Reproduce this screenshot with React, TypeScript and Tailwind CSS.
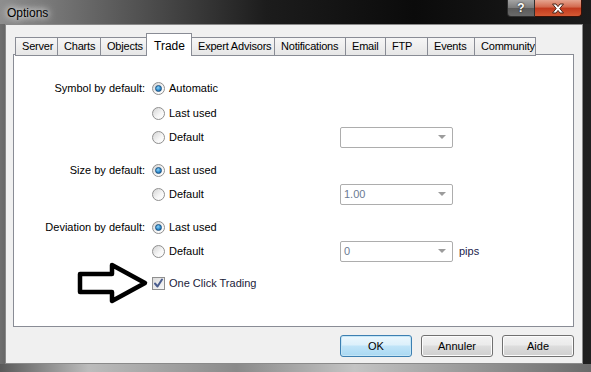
import React from 'react';

// Windows 7 style "Options" dialog, Trade tab

type Tab = { name: string; w: string; active?: boolean };

const tabs: Tab[] = [
  { name: 'Server', w: 'w-[43px]' },
  { name: 'Charts', w: 'w-[44px]' },
  { name: 'Objects', w: 'w-[47px]' },
  { name: 'Trade', w: 'w-[46px]', active: true },
  { name: 'Expert Advisors', w: 'w-[84px]' },
  { name: 'Notifications', w: 'w-[72px]' },
  { name: 'Email', w: 'w-[41px]' },
  { name: 'FTP', w: 'w-[43px]' },
  { name: 'Events', w: 'w-[48px]' },
  { name: 'Community', w: 'w-[62px]' },
];

type Row = {
  label?: string;
  kind: 'radio' | 'check';
  text: string;
  checked?: boolean;
  combo?: string;
  pips?: boolean;
  mt: string;
};

const rows: Row[] = [
  { label: 'Symbol by default:', kind: 'radio', text: 'Automatic', checked: true, mt: 'mt-0' },
  { kind: 'radio', text: 'Last used', mt: 'mt-[1px]' },
  { kind: 'radio', text: 'Default', combo: '', mt: 'mt-0' },
  { label: 'Size by default:', kind: 'radio', text: 'Last used', checked: true, mt: 'mt-[9px]' },
  { kind: 'radio', text: 'Default', combo: '1.00', mt: 'mt-0' },
  { label: 'Deviation by default:', kind: 'radio', text: 'Last used', checked: true, mt: 'mt-[9px]' },
  { kind: 'radio', text: 'Default', combo: '0', pips: true, mt: 'mt-0' },
  { kind: 'check', text: 'One Click Trading', checked: true, mt: 'mt-[8px]' },
];

function Radio({ checked }: { checked?: boolean }) {
  return (
    <div className="w-[13px] h-[13px] rounded-full border border-[#8f8f8f] bg-[linear-gradient(135deg,#d4d4d4,#f7f7f7_60%,#ffffff)] flex items-center justify-center">
      {checked && (
        <div className="w-[7px] h-[7px] rounded-full border border-[#1c5180] bg-[radial-gradient(circle_at_40%_35%,#8fd3f6,#2f8dd0_55%,#0f4f8f)]" />
      )}
    </div>
  );
}

function Check({ checked }: { checked?: boolean }) {
  return (
    <div className="w-[13px] h-[13px] border border-[#8f8f8f] bg-[linear-gradient(135deg,#dcdcdc,#f8f8f8)] flex items-center justify-center">
      {checked && (
        <svg width="11" height="11" viewBox="0 0 11 11">
          <path d="M2 5.5 L4.5 8.5 L9 1.5" fill="none" stroke="#4a5d8e" strokeWidth="2" strokeLinecap="round" strokeLinejoin="round" />
        </svg>
      )}
    </div>
  );
}

function Combo({ value }: { value: string }) {
  return (
    <div className="w-[113px] h-[21px] rounded-[2px] border border-[#adadad] bg-white flex items-center pl-[3px] pr-[6px]">
      <span className="flex-1 text-[#6b7a92]">{value}</span>
      <svg width="8" height="5" viewBox="0 0 8 5">
        <path d="M0 0 H8 L4 4 Z" fill="#9c9c9c" />
      </svg>
    </div>
  );
}

function Button({ label, primary }: { label: string; primary?: boolean }) {
  return (
    <div
      className={
        primary
          ? 'w-[72px] h-[22px] rounded-[3px] border border-[#3c7fb1] bg-[linear-gradient(#ecf7fd,#dcf0fb_45%,#c0e4f8_50%,#a9d8f2)] flex items-center justify-center shadow-[inset_0_0_0_1px_#c4e5f6]'
          : 'w-[72px] h-[22px] rounded-[3px] border border-[#707070] bg-[linear-gradient(#f2f2f2,#ebebeb_45%,#dddddd_50%,#cfcfcf)] flex items-center justify-center shadow-[inset_0_0_0_1px_#fcfcfc]'
      }
    >
      {label}
    </div>
  );
}

export default function App() {
  return (
    <div className="w-[591px] h-[372px] flex flex-col overflow-hidden bg-[linear-gradient(to_right,#6f6f6f,#3c3c3c_6%,#1a1a1a_40%,#0d0d0d_75%,#202020)] font-['Liberation_Sans',Arial,sans-serif] text-[11px] text-black">
      {/* title bar */}
      <div className="h-[24px] flex items-start shrink-0 bg-[linear-gradient(to_right,#8e8e8e,#5a5a5a_20%,#1c1c1c_45%,#0b0b0b_70%,#1c1c1c)]">
        <div className="pl-[7px] pt-[4px] text-[12px] text-black [text-shadow:0_0_6px_#ffffff,0_0_10px_#ffffff]">Options</div>
        <div className="ml-auto mr-[9px] flex h-[17px]">
          <div className="w-[28px] h-full rounded-bl-[4px] border border-t-0 border-[#2e2e2e] bg-[linear-gradient(#a4a4a4,#7a7a7a_50%,#5a5a5a_51%,#6a6a6a)] flex items-center justify-center text-white font-bold text-[12px] [text-shadow:0_0_2px_#000]">
            ?
          </div>
          <div className="w-[47px] h-full rounded-br-[4px] border border-t-0 border-l-0 border-[#3a1208] bg-[linear-gradient(#e5a48f,#d2684c_45%,#c1391d_50%,#d55a34)] flex items-center justify-center">
            <svg width="14" height="11" viewBox="0 0 14 11">
              <path d="M1.5 1 H5 L7 3.6 L9 1 H12.5 L8.8 5.5 L12.5 10 H9 L7 7.4 L5 10 H1.5 L5.2 5.5 Z" fill="#ffffff" stroke="#4a2418" strokeWidth="1" strokeLinejoin="round" />
            </svg>
          </div>
        </div>
      </div>

      {/* client area */}
      <div className="ml-[5px] mr-[8px] h-[340px] border border-[#8a8a8a] bg-[#f0f0f0] flex flex-col pt-[8px] pl-[7px] pr-[8px]">
        {/* tabs */}
        <div className="flex items-end pl-[2px] h-[22px] relative z-10">
          {tabs.map((t, i) =>
            t.active ? (
              <div
                key={t.name}
                className={`${t.w} -ml-px h-[22px] border border-b-0 border-[#898c95] bg-white flex items-start pt-[3px] pl-[7px] whitespace-nowrap text-[12px]`}
              >
                {t.name}
              </div>
            ) : (
              <div
                key={t.name}
                className={`${t.w} ${i === 0 ? '' : '-ml-px'} h-[19px] border border-[#898c95] bg-[linear-gradient(#f6f6f6,#e6e6e6)] flex items-center pl-[6px] mb-[-1px] whitespace-nowrap overflow-hidden tracking-[-0.2px]`}
              >
                {t.name}
              </div>
            )
          )}
        </div>

        {/* panel */}
        <div className="relative h-[273px] -mt-px border border-[#898c95] bg-white pt-[21px]">
          {rows.map((r, i) => (
            <div key={i} className={`${r.mt} h-[24px] flex items-center`}>
              <div className="w-[131px] text-right">{r.label ?? ''}</div>
              <div className="ml-[7px] w-[188px] flex items-center gap-[4px]">
                {r.kind === 'radio' ? <Radio checked={r.checked} /> : <Check checked={r.checked} />}
                <span className={r.kind === 'check' ? 'text-[#1b1b3a]' : ''}>{r.text}</span>
              </div>
              {r.combo !== undefined && <Combo value={r.combo} />}
              {r.pips && <span className="ml-[6px] text-[#1b1b4a]">pips</span>}
            </div>
          ))}

          {/* annotation arrow */}
          <svg className="absolute left-[58px] top-[201px]" width="82" height="52" viewBox="0 0 82 52">
            <path d="M8 18 H40 V9 L73 27 L40 45 V36 H8 Z" fill="none" stroke="#000" strokeWidth="4.5" strokeLinejoin="round" />
          </svg>
        </div>

        {/* buttons */}
        <div className="mt-[8px] flex justify-end gap-[9px]">
          <Button label="OK" primary />
          <Button label="Annuler" />
          <Button label="Aide" />
        </div>
      </div>
      <div className="flex-1 bg-[linear-gradient(to_right,#5a5a5a,#bcbcbc_15%,#8a8a8a_40%,#c4c4c4_60%,#6a6a6a)]" />
    </div>
  );
}
